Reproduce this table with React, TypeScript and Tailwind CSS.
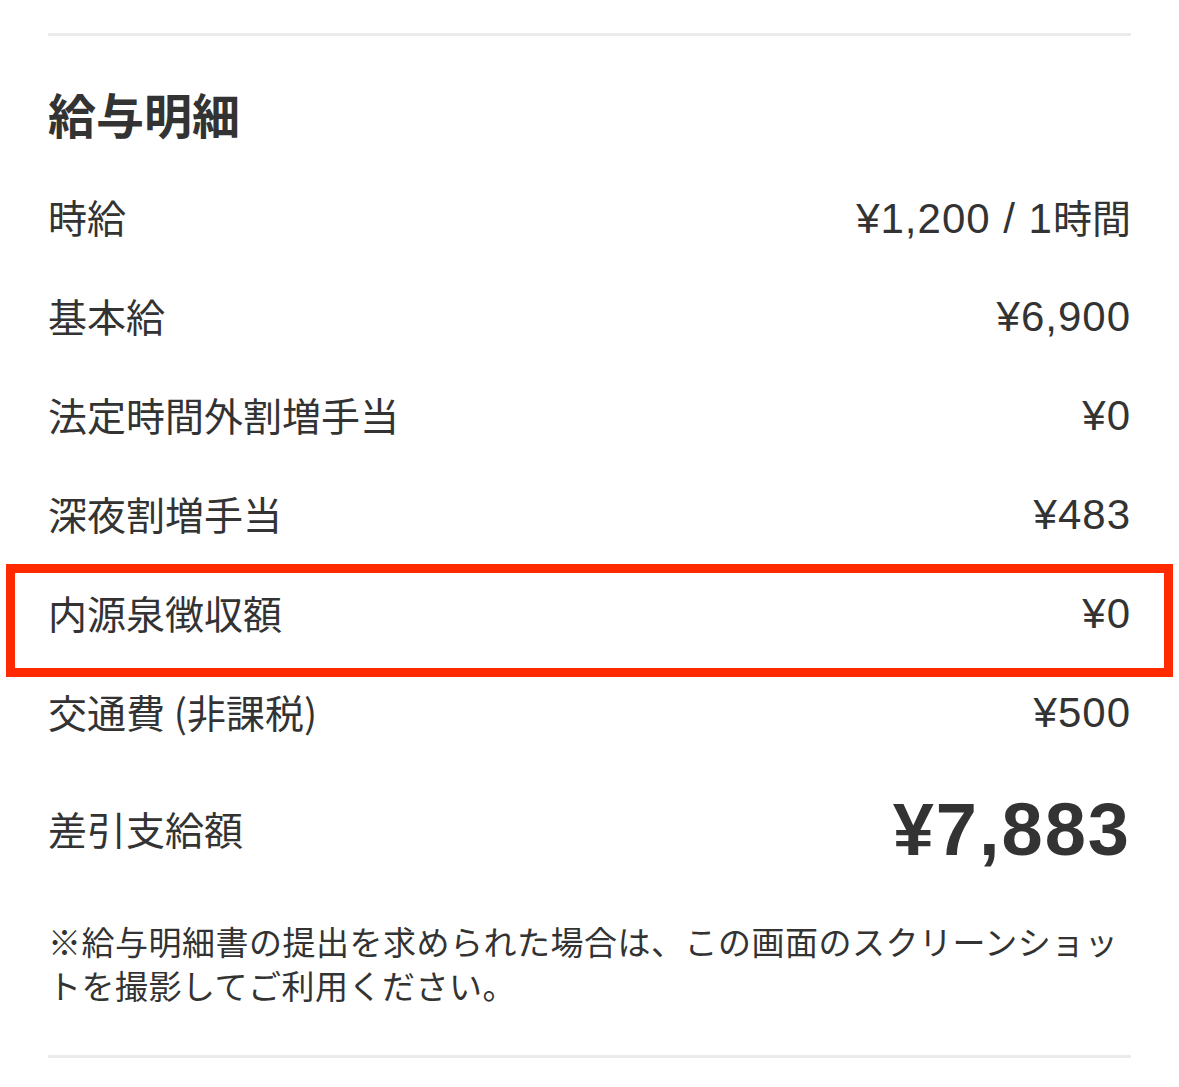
import React from "react";

const rows: { label: string; value: React.ReactNode; highlight?: boolean }[] = [
  { label: "時給", value: (<>¥1,200 / 1<span className="font-['Noto_Sans_CJK_JP'] text-[39px] tracking-normal">時間</span></>) },
  { label: "基本給", value: "¥6,900" },
  { label: "法定時間外割増手当", value: "¥0" },
  { label: "深夜割増手当", value: "¥483" },
  { label: "内源泉徴収額", value: "¥0", highlight: true },
  { label: "交通費 (非課税)", value: "¥500" },
];

export default function App() {
  return (
    <div className="w-[1179px] min-h-[1087px] bg-white px-[48px] pt-[33px] text-[#333333] font-['Noto_Sans_CJK_JP','Noto_Sans',sans-serif]">
      <div className="h-[3px] bg-[#ebebeb]" />
      <h2 className="mt-[53px] text-[48px] leading-none font-bold">給与明細</h2>
      <div className="mt-[30px]">
        {rows.map((r) => (
          <div key={r.label} className="relative flex h-[99px] items-center justify-between">
            <span className="text-[39px] leading-none">{r.label}</span>
            <span className="pt-[3px] font-['Liberation_Sans',Arial,sans-serif] text-[42px] leading-none tracking-[1px]">
              {r.value}
            </span>
            {r.highlight && (
              <div className="pointer-events-none absolute top-[1px] bottom-[-15px] left-[-42px] right-[-42px] border-[9px] border-[#ff2a00]" />
            )}
          </div>
        ))}
        <div className="flex h-[134px] items-center justify-between">
          <span className="text-[39px] leading-none">差引支給額</span>
          <span className="pt-[3px] font-['Liberation_Sans',Arial,sans-serif] text-[74px] font-bold leading-none tracking-[2px]">
            ¥7,883
          </span>
        </div>
      </div>
      <p className="mt-[24px] text-[33px] leading-[44px] tracking-[0.5px]">
        ※給与明細書の提出を求められた場合は、この画面のスクリーンショットを撮影してご利用ください。
      </p>
      <div className="mt-[48px] h-[3px] bg-[#ebebeb]" />
    </div>
  );
}
